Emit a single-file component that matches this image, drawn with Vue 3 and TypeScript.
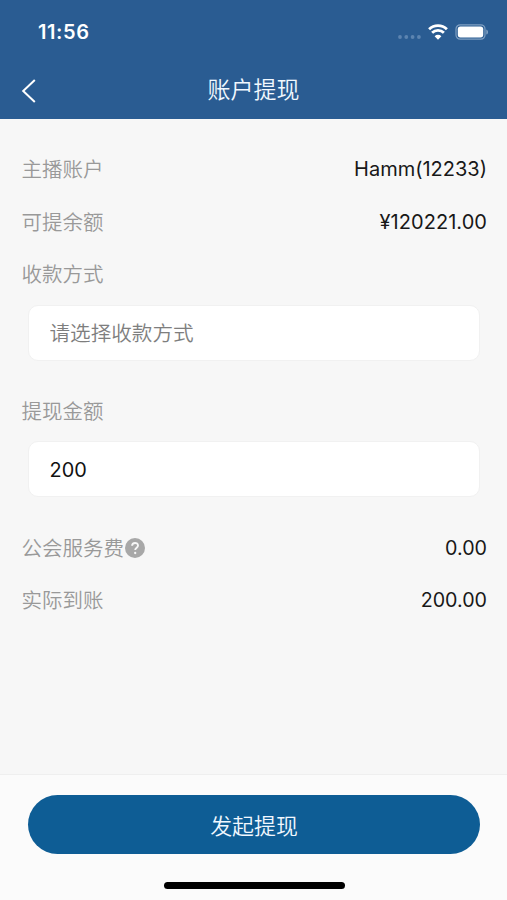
<script setup lang="ts">
import { ref } from 'vue'

const method = ref('')
const amount = ref('200')
const account = [
  { label: '主播账户', value: 'Hamm(12233)', kind: 'name' },
  { label: '可提余额', value: '¥120221.00', kind: 'money' },
]
</script>

<template>
  <div class="screen">
    <header class="header">
      <div class="status">
        <span class="time">11:56</span>
        <div class="indicators">
          <svg class="signal" width="26" height="6" viewBox="0 0 26 6">
            <circle cx="3" cy="3" r="1.9" />
            <circle cx="9.3" cy="3" r="1.9" />
            <circle cx="15.6" cy="3" r="1.9" />
            <circle cx="21.9" cy="3" r="1.9" />
          </svg>
          <svg class="wifi" width="20" height="16" viewBox="0 0 20 16">
            <path d="M1.1 5.2a12.7 12.7 0 0 1 17.8 0" />
            <path d="M4.1 8.8a8.4 8.4 0 0 1 11.8 0" />
            <path class="dot" d="M6.6 12.2a4.9 4.9 0 0 1 6.8 0L10 15.8z" />
          </svg>
          <svg class="battery" width="34" height="16" viewBox="0 0 34 16">
            <rect class="shell" x="1" y="0.8" width="29" height="14.4" rx="4.2" />
            <rect class="charge" x="2.8" y="2.6" width="25.4" height="10.8" rx="2.6" />
            <path class="tip" d="M31.4 5.4c2 .8 2 4.4 0 5.2z" />
          </svg>
        </div>
      </div>
      <div class="nav">
        <svg class="back" width="16" height="24" viewBox="0 0 16 24">
          <path d="M13.8 1 2.2 12l11.6 11" />
        </svg>
        <h1 class="title">账户提现</h1>
      </div>
    </header>

    <main class="form">
      <div v-for="item in account" :key="item.label" class="row">
        <span class="label">{{ item.label }}</span>
        <span class="value" :class="item.kind">{{ item.value }}</span>
      </div>
      <div class="row"><span class="label">收款方式</span></div>
      <input v-model="method" class="field" placeholder="请选择收款方式" readonly />
      <div class="row spaced"><span class="label">提现金额</span></div>
      <input v-model="amount" class="field" inputmode="decimal" />
      <div class="row spaced">
        <span class="label">公会服务费</span>
        <svg class="help" width="20" height="20" viewBox="0 0 20 20">
          <circle cx="10" cy="10" r="10" />
          <path d="M7.1 7.8C7.1 3.9 13 4.1 13 7.6c0 2.1-2.8 2.2-2.8 4.5" />
          <circle class="point" cx="10.2" cy="15" r="1.15" />
        </svg>
        <span class="value amount">0.00</span>
      </div>
      <div class="row">
        <span class="label">实际到账</span>
        <span class="value amount">200.00</span>
      </div>
    </main>

    <footer class="footer">
      <button class="submit" type="button">发起提现</button>
      <div class="home"></div>
    </footer>
  </div>
</template>

<style>
body {
  background: #f7f7f7;
}
</style>

<style scoped>
.screen {
  height: 900px;
  display: flex;
  flex-direction: column;
  background: #f7f7f7;
  font-family: Inter, "Noto Sans CJK SC", sans-serif;
  overflow: hidden;
}
.header {
  height: 119.4px;
  flex: none;
  background: #2a5c92;
  color: #fff;
}
.status {
  height: 64px;
  padding: 0 18px 0 38px;
  display: flex;
  align-items: center;
  justify-content: space-between;
}
.time {
  font-size: 20px;
  font-weight: 600;
  letter-spacing: 0.6px;
}
.indicators {
  display: flex;
  align-items: center;
}
.signal {
  margin: 10px 5px 0 0;
  fill: #5c84b0;
}
.wifi {
  margin-right: 7px;
  fill: none;
  stroke: #fff;
  stroke-width: 2.8;
}
.wifi .dot {
  fill: #fff;
  stroke: none;
}
.shell {
  fill: none;
  stroke: #7f9fc2;
  stroke-width: 1.2;
}
.charge {
  fill: #fff;
}
.tip {
  fill: #8eabc9;
}
.nav {
  height: 52px;
  display: grid;
  grid-template-columns: 60px 1fr 60px;
  align-items: center;
}
.back {
  margin-left: 21px;
  margin-top: 1px;
  fill: none;
  stroke: #fff;
  stroke-width: 2;
}
.title {
  margin: 0;
  font-size: 23px;
  font-weight: 350;
  line-height: 32px;
  text-align: center;
  color: #f1f8ff;
}
.form {
  flex: 1;
  padding: 23.6px 20px 0 21.5px;
}
.row {
  height: 52.6px;
  display: flex;
  align-items: center;
}
.label {
  padding-bottom: 2px;
  font-size: 20.5px;
  font-weight: 350;
  color: #999;
}
.value {
  margin-left: auto;
  font-size: 20px;
  color: #181818;
}
.value.money {
  letter-spacing: 0.05px;
}
.value.amount {
  font-size: 19.7px;
}
.help {
  margin-left: 1px;
  fill: #a8a8a8;
}
.help path {
  fill: none;
  stroke: #f7f7f7;
  stroke-width: 1.9;
}
.help .point {
  fill: #f7f7f7;
}
.field {
  display: block;
  box-sizing: border-box;
  width: 452px;
  height: 56px;
  margin: 4px 0 0 6.5px;
  padding: 2px 21px 0 20.5px;
  border: 1px solid #f1f1f1;
  border-radius: 10px;
  outline: none;
  background: #fff;
  font: 400 19.9px Inter, "Noto Sans CJK SC", sans-serif;
  color: #111;
}
.field::placeholder {
  color: #7e7e7e;
  font-size: 20.6px;
  font-weight: 350;
  opacity: 1;
}
.row.spaced {
  margin-top: 24px;
}
.footer {
  flex: none;
  box-sizing: border-box;
  height: 126.5px;
  padding: 20.5px 27px 0 28px;
  border-top: 1px solid #efefef;
  background: #fbfbfb;
  display: flex;
  flex-direction: column;
  align-items: center;
}
.submit {
  width: 100%;
  height: 59px;
  padding: 0;
  border: 0;
  border-radius: 30px;
  background: #0e5d95;
  color: #f1f8ff;
  font: 350 21.9px "Noto Sans CJK SC", sans-serif;
}
.home {
  width: 181px;
  height: 7px;
  margin-top: 27.5px;
  border-radius: 4px;
  background: #000;
}
</style>
